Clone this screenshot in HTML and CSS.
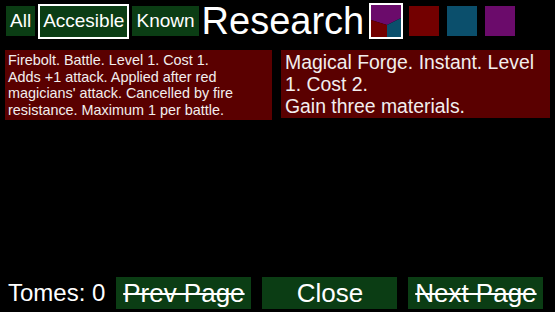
FILE: index.html
```html
<!DOCTYPE html>
<html lang="en">
<head>
    <meta charset="UTF-8">
    <title>Research</title>
    <link rel="stylesheet" href="styles.css">
</head>
<body>
    <div class="screen">
        <div class="top-bar">
            <button class="tab">All</button>
            <button class="tab selected">Accesible</button>
            <button class="tab">Known</button>
            <h1 class="title">Research</h1>
            <div class="swatch mixed">
                <svg width="30" height="32" viewBox="0 0 30 32">
                    <polygon points="0,0 30,0 30,13 16,20 0,15" fill="#6b0b6b"/>
                    <polygon points="0,15 16,20 16,32 0,32" fill="#730000"/>
                    <polygon points="16,20 30,13 30,32 16,32" fill="#0b4f6c"/>
                </svg>
            </div>
            <div class="swatch red"></div>
            <div class="swatch blue"></div>
            <div class="swatch purple"></div>
        </div>

        <div class="cards">
            <div class="card small">
                Firebolt. Battle. Level 1. Cost 1.<br>
                Adds +1 attack. Applied after red magicians' attack. Cancelled by fire resistance. Maximum 1 per battle.
            </div>
            <div class="card">
                Magical Forge. Instant. Level 1. Cost 2.<br>
                Gain three materials.
            </div>
        </div>

        <div class="bottom-bar">
            <span class="tomes">Tomes: 0</span>
            <button class="nav disabled">Prev Page</button>
            <button class="nav">Close</button>
            <button class="nav disabled">Next Page</button>
        </div>
    </div>
</body>
</html>
```

FILE: styles.css
```css
* {
    margin: 0;
    padding: 0;
    box-sizing: border-box;
    font-family: "Liberation Sans", Arial, sans-serif;
}

body {
    background: #000;
    color: #fff;
}

.screen {
    height: 312px;
    display: flex;
    flex-direction: column;
    padding: 3px 5px 3px 5px;
}

.top-bar {
    display: flex;
    align-items: center;
    height: 36px;
}

.tab {
    background: #0b3d14;
    color: #fff;
    border: 2px solid transparent;
    font-size: 19px;
    height: 30px;
    padding: 0 2px;
    margin-right: 3px;
}

.tab:first-child {
    margin-left: 1px;
}

.tab.selected {
    border-color: #fff;
    height: 35px;
    padding: 0 3px;
}

.title {
    font-size: 38px;
    font-weight: normal;
    margin: 0 5px 0 0;
    line-height: 36px;
}

.swatch {
    width: 30px;
    height: 30px;
    margin-right: 8px;
}

.swatch.mixed {
    width: 34px;
    height: 36px;
    border: 2px solid #fff;
    margin-right: 6px;
}

.swatch svg {
    display: block;
}

.red { background: #730000; }
.blue { background: #0b4f6c; }
.purple { background: #6b0b6b; }

.cards {
    flex: 1;
    display: flex;
    align-items: flex-start;
    gap: 9px;
    margin-top: 11px;
}

.card {
    flex: 1;
    background: #5a0000;
    color: #f2eeee;
    font-size: 19.4px;
    line-height: 22px;
    padding: 1px 4px 1px 4px;
}

.card.small {
    font-size: 14.4px;
    line-height: 16.7px;
    padding: 2px 3px 1px 3px;
}

.bottom-bar {
    display: flex;
    align-items: center;
    gap: 11px;
}

.tomes {
    font-size: 24px;
    margin-left: 3px;
}

.nav {
    width: 135px;
    height: 32px;
    background: #0b3d14;
    color: #fff;
    border: none;
    font-size: 26px;
}

.nav.disabled {
    text-decoration: line-through;
}
```
